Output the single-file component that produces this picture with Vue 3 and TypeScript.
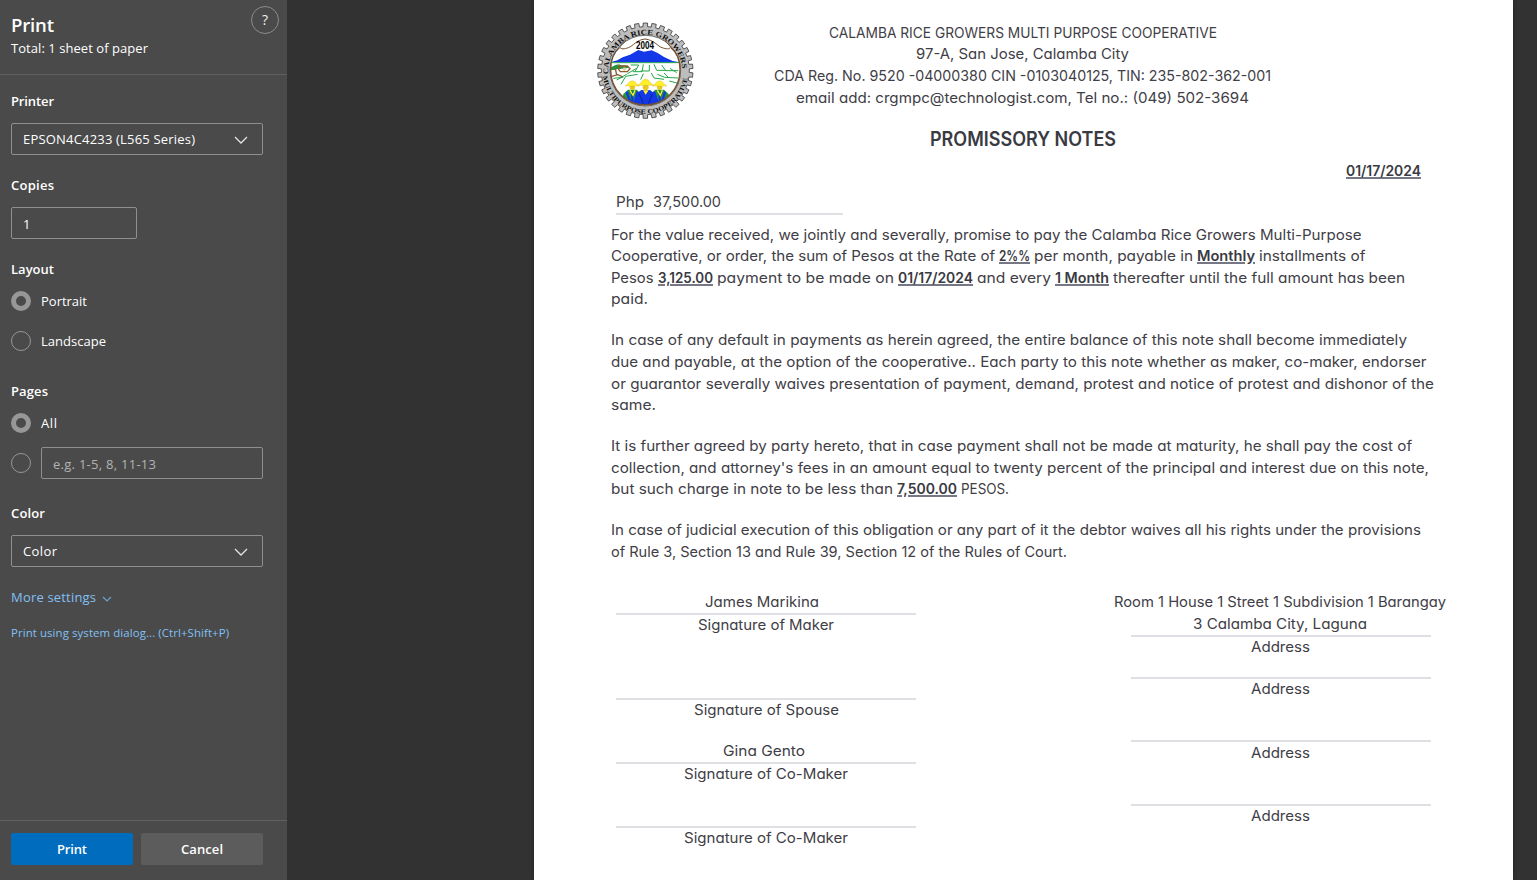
<script setup lang="ts">
import type { Directive } from 'vue'

interface Segment {
  text: string
  width: number
  strong?: boolean
}
interface SignatureLine {
  names: Segment[]
  label: Segment
  space: number
  labelGap?: number
}

/* Spreads a run of text over a given width, by tracking or, with .wide, by widening the letters. */
const vFit: Directive<HTMLElement, number> = {
  mounted(el, binding) {
    const count = (el.textContent ?? '').trim().length
    if (count < 2) return
    const natural = el.getBoundingClientRect().width
    if (binding.modifiers.wide) {
      el.style.transform = `scaleX(${binding.value / natural})`
      el.style.marginRight = `${binding.value - natural}px`
      return
    }
    const spacing = (binding.value - natural) / (count - 1)
    el.style.letterSpacing = `${spacing}px`
    el.style.marginRight = `${-spacing}px`
  },
}

const header: Segment[] = [
  { text: 'CALAMBA RICE GROWERS MULTI PURPOSE COOPERATIVE', width: 388 },
  { text: '97-A, San Jose, Calamba City', width: 213 },
  { text: 'CDA Reg. No. 9520 -04000380 CIN -0103040125, TIN: 235-802-362-001', width: 497 },
  { text: 'email add: crgmpc@technologist.com, Tel no.: (049) 502-3694', width: 453 },
]

const paragraphs: Segment[][][] = [
  [
    [{ text: 'For the value received, we jointly and severally, promise to pay the Calamba Rice Growers Multi-Purpose', width: 750.5 }],
    [
      { text: 'Cooperative, or order, the sum of Pesos at the Rate of', width: 384 },
      { text: '2%%', width: 31, strong: true },
      { text: 'per month, payable in', width: 159 },
      { text: 'Monthly', width: 58, strong: true },
      { text: 'installments of', width: 106.5 },
    ],
    [
      { text: 'Pesos', width: 42.5 },
      { text: '3,125.00', width: 55, strong: true },
      { text: 'payment to be made on', width: 177 },
      { text: '01/17/2024', width: 75, strong: true },
      { text: 'and every', width: 74 },
      { text: '1 Month', width: 54, strong: true },
      { text: 'thereafter until the full amount has been', width: 292 },
    ],
    [{ text: 'paid.', width: 37 }],
  ],
  [
    [{ text: 'In case of any default in payments as herein agreed, the entire balance of this note shall become immediately', width: 796 }],
    [{ text: 'due and payable, at the option of the cooperative.. Each party to this note whether as maker, co-maker, endorser', width: 815.5 }],
    [{ text: 'or guarantor severally waives presentation of payment, demand, protest and notice of protest and dishonor of the', width: 823 }],
    [{ text: 'same.', width: 45 }],
  ],
  [
    [{ text: 'It is further agreed by party hereto, that in case payment shall not be made at maturity, he shall pay the cost of', width: 801 }],
    [{ text: "collection, and attorney's fees in an amount equal to twenty percent of the principal and interest due on this note,", width: 818 }],
    [
      { text: 'but such charge in note to be less than', width: 282 },
      { text: '7,500.00', width: 60, strong: true },
      { text: 'PESOS.', width: 48 },
    ],
  ],
  [
    [{ text: 'In case of judicial execution of this obligation or any part of it the debtor waives all his rights under the provisions', width: 810 }],
    [{ text: 'of Rule 3, Section 13 and Rule 39, Section 12 of the Rules of Court.', width: 456 }],
  ],
]

const makers: SignatureLine[] = [
  { names: [{ text: 'James Marikina', width: 114 }], label: { text: 'Signature of Maker', width: 136 }, space: 22 },
  { names: [], label: { text: 'Signature of Spouse', width: 145 }, space: 62 },
  { names: [{ text: 'Gina Gento', width: 82 }], label: { text: 'Signature of Co-Maker', width: 164 }, space: 41 },
  { names: [], label: { text: 'Signature of Co-Maker', width: 164 }, space: 41 },
]

const addresses: SignatureLine[] = [
  {
    names: [
      { text: 'Room 1 House 1 Street 1 Subdivision 1 Barangay', width: 332 },
      { text: '3 Calamba City, Laguna', width: 174 },
    ],
    label: { text: 'Address', width: 59 },
    space: 44,
  },
  { names: [], label: { text: 'Address', width: 59 }, space: 19 },
  { names: [], label: { text: 'Address', width: 59 }, space: 40, labelGap: 1 },
  { names: [], label: { text: 'Address', width: 59 }, space: 41 },
]

function gearPath(cx: number, cy: number, outer: number, inner: number, teeth: number): string {
  const step = (Math.PI * 2) / teeth
  const parts: string[] = []
  const point = (r: number, a: number) => `${(cx + r * Math.cos(a)).toFixed(2)},${(cy + r * Math.sin(a)).toFixed(2)}`
  for (let i = 0; i < teeth; i++) {
    const a = i * step - Math.PI / 2
    parts.push(
      point(inner, a - step * 0.28),
      point(outer, a - step * 0.25),
      point(outer, a + step * 0.25),
      point(inner, a + step * 0.28),
    )
  }
  return `M${parts.join('L')}Z`
}
const gear = gearPath(166, 167, 143, 132, 34)
</script>

<template>
  <div class="screen">
    <aside class="panel">
      <header class="panel-head">
        <div>
          <h1><span v-fit="43" class="run">Print</span></h1>
          <p><span v-fit="137" class="run">Total: 1 sheet of paper</span></p>
        </div>
        <button class="help" aria-label="Help"><span>?</span></button>
      </header>

      <div class="options">
        <div class="label"><span v-fit="43" class="run">Printer</span></div>
        <div class="field">
          <span v-fit="172" class="run">EPSON4C4233 (L565 Series)</span>
          <svg class="chevron" viewBox="0 0 14 8"><path d="M1 1l6 6 6-6" /></svg>
        </div>

        <div class="label"><span v-fit="43" class="run">Copies</span></div>
        <div class="field short"><span class="run drop">1</span></div>

        <div class="label"><span v-fit="43" class="run">Layout</span></div>
        <div class="choice"><i class="radio on"></i><span v-fit="46" class="run">Portrait</span></div>
        <div class="choice second"><i class="radio"></i><span v-fit="65" class="run">Landscape</span></div>

        <div class="label pages"><span v-fit="37" class="run">Pages</span></div>
        <div class="choice"><i class="radio on"></i><span v-fit="16" class="run">All</span></div>
        <div class="choice range">
          <i class="radio"></i>
          <div class="field"><span v-fit="103" class="run hint drop">e.g. 1-5, 8, 11-13</span></div>
        </div>

        <div class="label color"><span v-fit="34" class="run">Color</span></div>
        <div class="field">
          <span v-fit="34" class="run">Color</span>
          <svg class="chevron" viewBox="0 0 14 8"><path d="M1 1l6 6 6-6" /></svg>
        </div>

        <a class="link">
          <span v-fit="85" class="run">More settings</span>
          <svg viewBox="0 0 10 6"><path d="M1 1l4 4 4-4" /></svg>
        </a>
        <a class="link small"><span v-fit="218" class="run">Print using system dialog... (Ctrl+Shift+P)</span></a>
      </div>

      <footer class="actions">
        <button class="primary"><span v-fit="30" class="run">Print</span></button>
        <button><span v-fit="42" class="run">Cancel</span></button>
      </footer>
    </aside>

    <main class="preview">
      <article class="sheet">
        <div class="letterhead">
          <svg class="seal" viewBox="0 0 330 330">
            <defs>
              <path id="arc-top" d="M55.3 178A111 111 0 1 1 276.7 178" />
              <path id="arc-bottom" d="M38.5 184A128.5 128.5 0 0 0 293.5 184" />
              <clipPath id="disc"><circle cx="166" cy="167" r="104" /></clipPath>
            </defs>
            <path :d="gear" fill="#bdbdbd" stroke="#333" stroke-width="2.4" />
            <circle cx="166" cy="167" r="106" fill="#fff" stroke="#333" stroke-width="2" />
            <g clip-path="url(#disc)">
              <path d="M60 142L82 136L98 127L120 119L145 105L162 110L185 106L203 114L222 126L248 138L275 143Z" fill="#1238e8" />
              <path d="M58 143H274" stroke="#24a648" stroke-width="3" />
              <g stroke="#24a648" stroke-width="3" fill="none">
                <path d="M122 150l24 0-10 18M160 148l-4 22-28 0M178 150v18l-26 0M192 148l8 18 28 0M215 150l12 17 38 0M110 178l-30 17M143 178l-36 6-14 24M160 176l-8 18M184 174l8 15 30 4M202 178l22 9 40 2M222 174l12 12M140 160l-28 16M240 160l20 13M70 190l30-3M238 198l30 8" />
              </g>
              <path d="M58 163c3-8 10-8 14-11 8-5 19-5 23 0 8-2 17 1 22 5-5 5-12 1-17 3-9 4-17 0-23 4-8 1-14 2-19-1Z" fill="#26943c" />
              <path d="M76 160l4 20M65 184l18-5 14 6M88 153h24l8 8-8 9H91l-6-8Z" fill="none" stroke="#8c5b30" stroke-width="4" />
              <circle cx="103" cy="162" r="5" fill="#d6cba3" />
              <g v-for="x in [127, 209]" :key="x">
                <path :d="`M${x - 31} 268l4-31 14-13h26l14 13 4 31Z`" fill="#23963d" />
                <path :d="`M${x - 17} 230l12 35M${x + 16} 230l-10 35M${x} 230v36`" stroke="#1238e8" stroke-width="7" />
                <path :d="`M${x - 7} 226l9 15 6-15`" stroke="#fff028" stroke-width="4" fill="none" />
                <circle :cx="x" cy="217" r="8" fill="#e5c822" />
                <path :d="`M${x - 22} 213c9-3 9-14 22-16 13 2 13 13 22 16Z`" fill="#fff028" stroke="#c7a828" stroke-width="1" />
              </g>
              <path d="M133 270l5-33 16-12h26l16 12 5 33Z" fill="#1238e8" />
              <path d="M148 237l12 29M187 237l-12 29" stroke="#102489" stroke-width="3" />
              <path d="M159 226l8 13 9-13Z" fill="#fff028" />
              <circle cx="167" cy="217" r="9" fill="#e5c822" />
              <path d="M143 211c10-3 10-16 24-19 14 3 14 16 25 19Z" fill="#fff028" stroke="#c7a828" stroke-width="1" />
            </g>
            <path d="M108 76L89 96C92 104 104 102 115 98C130 93 138 75 165 72C192 75 202 93 216 98C228 102 239 104 242 96L225 77" fill="none" stroke="#76502f" stroke-width="3" />
            <path d="M88 98C67 115 62 137 62 164C62 226 110 270 166 270S270 226 270 164C270 137 264 115 243 98" fill="none" stroke="#76502f" stroke-width="4" />
            <text class="year" x="165" y="103" text-anchor="middle" textLength="54" lengthAdjust="spacingAndGlyphs">2004</text>
            <text class="rim"><textPath href="#arc-top" textLength="348" lengthAdjust="spacingAndGlyphs">CALAMBA RICE GROWERS</textPath></text>
            <text class="rim lower"><textPath href="#arc-bottom" textLength="366" lengthAdjust="spacingAndGlyphs">MULTIPURPOSE COOPERATIVE</textPath></text>
          </svg>
          <div class="org">
            <div v-for="line in header" :key="line.text" class="line">
              <span v-fit.wide="line.width" class="run">{{ line.text }}</span>
            </div>
          </div>
        </div>

        <h2><span v-fit.wide="186" class="run">PROMISSORY NOTES</span></h2>
        <div class="date"><span v-fit.wide="75" class="run strong">01/17/2024</span></div>
        <div class="amount">
          <span v-fit.wide="28" class="run">Php</span>
          <span v-fit.wide="68" class="run">37,500.00</span>
        </div>

        <section class="terms">
          <div v-for="(paragraph, p) in paragraphs" :key="p" class="paragraph">
            <div v-for="(line, l) in paragraph" :key="l" class="line">
              <span v-for="(segment, s) in line" :key="s" v-fit.wide="segment.width" class="run" :class="{ strong: segment.strong }">{{ segment.text }}</span>
            </div>
          </div>
        </section>

        <section class="signatures">
          <div v-for="(column, c) in [makers, addresses]" :key="c" class="column" :class="{ right: c === 1 }">
            <div v-for="(entry, e) in column" :key="e" class="entry">
              <div class="names" :style="{ height: entry.space + 'px' }">
                <div v-for="name in entry.names" :key="name.text" class="line">
                  <span v-fit.wide="name.width" class="run">{{ name.text }}</span>
                </div>
              </div>
              <div class="rule"></div>
              <div class="caption" :style="{ paddingTop: (entry.labelGap ?? 0) + 'px' }">
                <span v-fit.wide="entry.label.width" class="run">{{ entry.label.text }}</span>
              </div>
            </div>
          </div>
        </section>
      </article>
    </main>
  </div>
</template>

<style>
body {
  overflow: hidden;
  background: #323232;
}
</style>

<style scoped>
* {
  box-sizing: border-box;
}
.screen {
  display: flex;
  width: 1537px;
  height: 880px;
  overflow: hidden;
  background: #323232;
}
.run {
  display: inline-block;
  flex: none;
  transform-origin: left center;
  white-space: nowrap;
}
.panel {
  display: flex;
  flex: none;
  flex-direction: column;
  width: 287px;
  background: #4a4a4a;
  color: #fff;
  font: 13px/20px "Open Sans", "Noto Sans", sans-serif;
}
.panel-head {
  display: flex;
  justify-content: space-between;
  height: 75px;
  padding: 6px 8px 0 11px;
  border-bottom: 1px solid #606060;
}
h1 {
  margin: 5px 0 0;
  font-size: 18.6px;
  font-weight: 600;
  line-height: 27px;
}
.panel-head p {
  margin: 0;
}
.help {
  width: 28px;
  height: 28px;
  padding: 0;
  border: 1px solid #8b8b8b;
  border-radius: 50%;
  background: none;
  color: #eee;
  font: 14px/26px "Open Sans", sans-serif;
}
.options {
  flex: 1;
  padding: 16px 24px 0 11px;
}
.label {
  height: 20px;
  margin: 20px 0 12px;
  font-weight: 600;
}
.label:first-child {
  margin-top: 0;
}
.label.pages {
  margin-top: 30px;
}
.label.color {
  margin-top: 24px;
}
.field {
  display: flex;
  align-items: center;
  justify-content: space-between;
  width: 252px;
  height: 32px;
  padding: 0 14px 0 11px;
  border: 1px solid #8f8f8f;
  border-radius: 2px;
}
.field.short {
  width: 126px;
}
.drop {
  padding-top: 2px;
}
.hint {
  color: #b3b3b3;
}
.chevron {
  width: 14px;
  height: 8px;
  margin-top: 1px;
}
svg {
  flex: none;
}
.chevron path,
.link path {
  fill: none;
  stroke: #e4e4e4;
  stroke-width: 1.3;
}
.choice {
  display: flex;
  align-items: center;
  gap: 10px;
  height: 20px;
}
.second {
  margin-top: 20px;
}
.range {
  height: 32px;
  margin-top: 14px;
}
.range .field {
  width: 222px;
}
.radio {
  width: 20px;
  height: 20px;
  border: 1px solid #979797;
  border-radius: 50%;
}
.radio.on {
  border: 5px solid #979797;
}
.link {
  display: flex;
  align-items: center;
  gap: 6px;
  height: 20px;
  margin-top: 20px;
  color: #82c0f5;
}
.link svg {
  width: 10px;
  height: 6px;
  margin-top: 4px;
}
.link path {
  stroke: #6ba1cf;
  stroke-width: 1.2;
}
.link.small {
  margin-top: 16px;
  font-size: 11.4px;
}
.actions {
  display: flex;
  gap: 8px;
  height: 60px;
  padding: 12px 0 0 11px;
  border-top: 1px solid #606060;
}
.actions button {
  width: 122px;
  height: 32px;
  padding: 0;
  border: 0;
  border-radius: 2px;
  background: #5c5c5c;
  color: #fff;
  font: 600 13px/32px "Open Sans", "Noto Sans", sans-serif;
}
.actions .primary {
  background: #006cbe;
}
.preview {
  flex: 1;
  padding-left: 247px;
}
.sheet {
  width: 979px;
  height: 880px;
  padding: 15px 0 0 56px;
  background: #fff;
  box-shadow: 0 0 4px rgba(0, 0, 0, 0.35);
  color: #3f4047;
  font: 14.4px/21.6px Inter, "Open Sans", sans-serif;
  font-feature-settings: "cv11" 1;
}
.letterhead {
  display: flex;
  height: 110px;
}
.seal {
  width: 110px;
  height: 110px;
}
.year {
  font: 700 32px "Liberation Sans", sans-serif;
}
.rim {
  fill: #111;
  font: 700 22px "Liberation Serif", serif;
}
.lower {
  font-size: 20px;
}
.org {
  display: flex;
  flex-direction: column;
  align-items: center;
  width: 645px;
  padding-top: 6.8px;
}
.line {
  display: flex;
  gap: 4px;
  height: 21.6px;
}
h2 {
  display: flex;
  justify-content: center;
  width: 866px;
  margin: 0;
  color: #3a3a42;
  font-size: 19.4px;
  font-weight: 600;
  line-height: 29px;
}
.date {
  display: flex;
  justify-content: flex-end;
  width: 831px;
  padding-top: 6px;
}
.strong {
  color: #393a42;
  font-weight: 600;
  text-decoration: underline;
  text-decoration-color: #757785;
  text-decoration-thickness: 2px;
  text-underline-offset: 1.4px;
}
.amount {
  display: flex;
  gap: 9px;
  width: 227px;
  height: 33px;
  margin: 0 0 0 26px;
  padding-top: 9px;
  border-bottom: 2px solid #dfdfe4;
}
.terms {
  padding: 9.1px 0 0 21px;
}
.paragraph {
  margin-bottom: 19.4px;
}
.signatures {
  display: flex;
  gap: 215px;
  padding: 8.9px 0 0 26px;
}
.column {
  width: 300px;
}
.names {
  display: flex;
  flex-direction: column;
  align-items: center;
  justify-content: flex-end;
  padding-right: 8px;
}
.right .names {
  padding-right: 2px;
}
.entry:nth-child(3) .names {
  padding-right: 4px;
}
.names .line {
  flex: none;
  height: 22px;
  line-height: 22px;
}
.rule {
  height: 2px;
  background: #dfdfe4;
}
.caption {
  display: flex;
  justify-content: center;
  height: 21px;
  line-height: 19px;
}
.right .caption {
  padding-right: 2px;
}
</style>
